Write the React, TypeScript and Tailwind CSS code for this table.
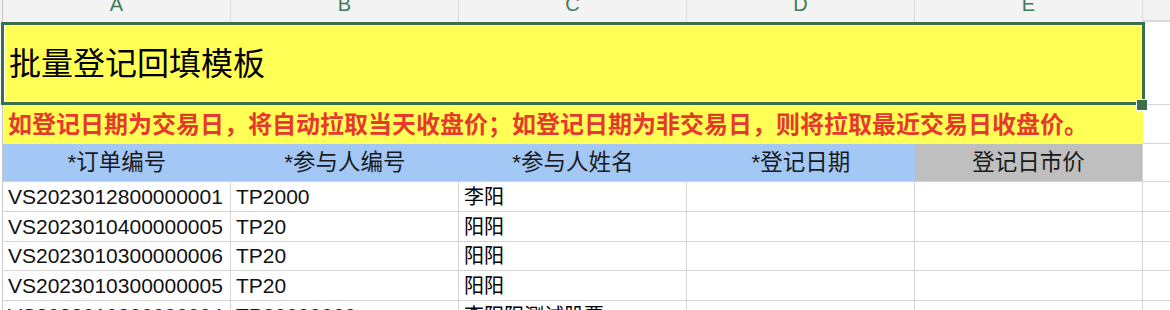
import React from 'react';

type Header = {
  label: string;
  bg: string;
};

const COLUMNS = ['A', 'B', 'C', 'D', 'E'];

const HEADERS: Header[] = [
  { label: '*订单编号', bg: 'bg-[#a3c8f6]' },
  { label: '*参与人编号', bg: 'bg-[#a3c8f6]' },
  { label: '*参与人姓名', bg: 'bg-[#a3c8f6]' },
  { label: '*登记日期', bg: 'bg-[#a3c8f6]' },
  { label: '登记日市价', bg: 'bg-[#bfbfbf]' },
];

// 订单号 / 参与人编号 / 姓名, 其余两列为空
const ROWS: { cells: string[]; h: string }[] = [
  { cells: ['VS2023012800000001', 'TP2000', '李阳', '', ''], h: 'h-[30px]' },
  { cells: ['VS2023010400000005', 'TP20', '阳阳', '', ''], h: 'h-[30px]' },
  { cells: ['VS2023010300000006', 'TP20', '阳阳', '', ''], h: 'h-[29px]' },
  { cells: ['VS2023010300000005', 'TP20', '阳阳', '', ''], h: 'h-[30px]' },
  { cells: ['VS2023010300000004', 'TP20000000', '李阳阳测试股票', '', ''], h: 'h-[30px]' },
];

const NOTE =
  '如登记日期为交易日，将自动拉取当天收盘价；如登记日期为非交易日，则将拉取最近交易日收盘价。';

function Gutter({ className = '' }: { className?: string }) {
  return <div className={`w-[3px] shrink-0 border-r border-[#c9c9c9] ${className}`} />;
}

function ColumnHeader() {
  return (
    <div className="flex h-[22px] bg-[#f3f3f3] overflow-hidden">
      <Gutter />
      {COLUMNS.map((c) => (
        <div
          key={c}
          className="w-[228px] shrink-0 border-r border-[#dadada] flex justify-center"
        >
          <span className="text-[20px] leading-[20px] -mt-[6px] text-[#3f7a57]">{c}</span>
        </div>
      ))}
      <div className="flex-1 border-b-2 border-[#d9d9d9]" />
    </div>
  );
}

function TitleRow() {
  return (
    <div className="flex h-[83px]">
      <div className="w-[1px] shrink-0" />
      <div className="w-[1144px] shrink-0 border-[3px] border-[#3a6f4c]">
        <div className="h-full border border-white bg-[#ffff55] flex items-center pl-[4px]">
          <span className="text-[32px] font-normal text-black">批量登记回填模板</span>
        </div>
      </div>
      <div className="flex-1 border-b border-[#d4d4d4]" />
    </div>
  );
}

function NoteRow() {
  return (
    <div className="flex h-[39px]">
      <Gutter />
      <div className="w-[1140px] shrink-0 bg-[#ffff55] flex items-center pl-[5px] whitespace-nowrap overflow-visible">
        <span className="text-[24px] font-bold text-[#e8382d]">{NOTE}</span>
      </div>
      <div className="flex-1 border-b border-[#d4d4d4]" />
    </div>
  );
}

function HeaderRow() {
  return (
    <div className="flex h-[38px]">
      <Gutter />
      {HEADERS.map((h, i) => (
        <div
          key={h.label}
          className={`w-[228px] shrink-0 border-b border-[#d4d4d4] flex items-center justify-center ${h.bg} ${
            i === HEADERS.length - 1 ? 'border-r' : ''
          }`}
        >
          <span className="text-[22.5px] text-[#1a1a1a]">{h.label}</span>
        </div>
      ))}
      <div className="flex-1 border-b border-[#d4d4d4]" />
    </div>
  );
}

function DataRow({ cells, h }: { cells: string[]; h: string }) {
  return (
    <div className={`flex ${h}`}>
      <Gutter />
      {cells.map((v, i) => (
        <div
          key={i}
          className="w-[228px] shrink-0 border-r border-b border-[#d4d4d4] flex items-center pl-[5px] whitespace-nowrap overflow-hidden"
        >
          <span className={/[\u4e00-\u9fa5]/.test(v) ? 'text-[20px] text-black' : 'text-[21px] text-[#111]'}>
            {v}
          </span>
        </div>
      ))}
      <div className="flex-1 border-b border-[#d4d4d4]" />
    </div>
  );
}

export default function App() {
  return (
    <div className="relative w-[1170px] h-[310px] overflow-hidden bg-white font-['Liberation_Sans','Noto_Sans_CJK_SC',sans-serif]">
      <ColumnHeader />
      <TitleRow />
      <NoteRow />
      <HeaderRow />
      {ROWS.map((r, i) => (
        <DataRow key={i} cells={r.cells} h={r.h} />
      ))}
      {/* 选区右下角的填充柄 */}
      <div className="absolute left-[1136px] top-[99px] w-[12px] h-[12px] bg-[#3a6f4c] border border-white" />
    </div>
  );
}
